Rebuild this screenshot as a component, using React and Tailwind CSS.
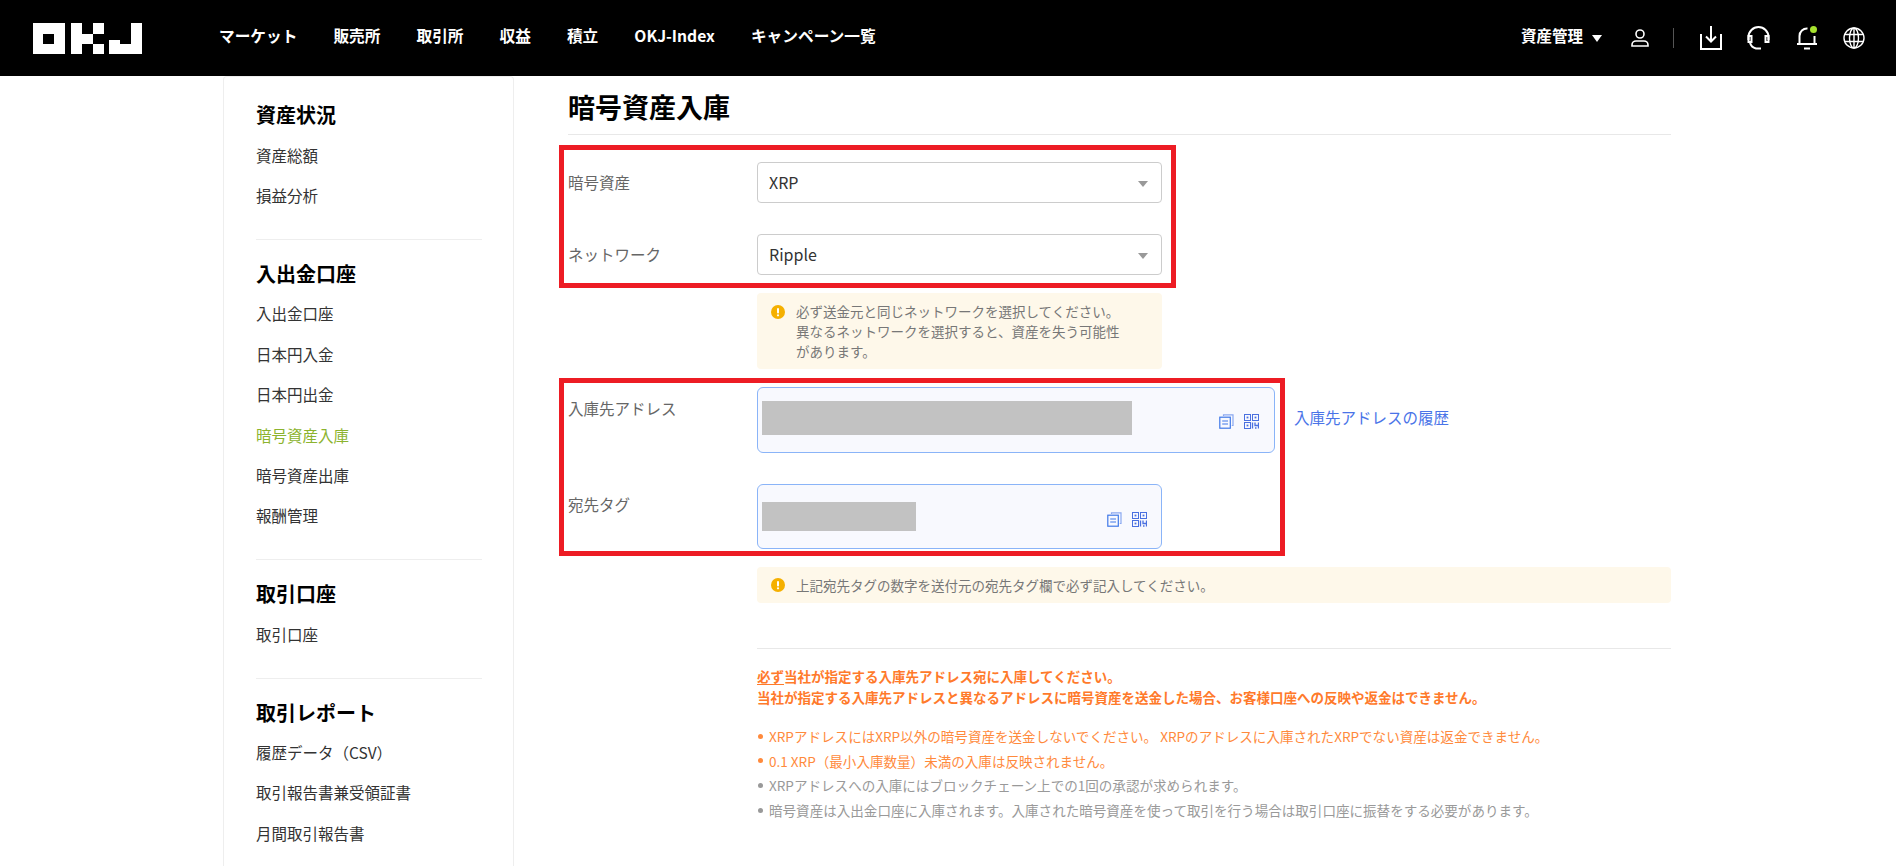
const sections = [
  { title: "資産状況", items: ["資産総額", "損益分析"] },
  { title: "入出金口座", items: ["入出金口座", "日本円入金", "日本円出金", "暗号資産入庫", "暗号資産出庫", "報酬管理"] },
  { title: "取引口座", items: ["取引口座"] },
  { title: "取引レポート", items: ["履歴データ（CSV）", "取引報告書兼受領証書", "月間取引報告書"] },
];
const nav = ["マーケット", "販売所", "取引所", "収益", "積立", "OKJ-Index", "キャンペーン一覧"];

function Logo() {
  return (
    <svg width="109" height="31" viewBox="0 0 109 31" fill="#fff" className="shrink-0">
      <path fillRule="evenodd" d="M0 0H32V31H0ZM10 11V21H21V11Z" />
      <rect x="38" y="0" width="11" height="31" />
      <rect x="49" y="11" width="11" height="10" />
      <rect x="60" y="0" width="11" height="11" />
      <rect x="60" y="21" width="11" height="10" />
      <rect x="76" y="17" width="11" height="14" />
      <rect x="76" y="21" width="33" height="10" />
      <rect x="98" y="0" width="11" height="31" />
    </svg>
  );
}
function UserIcon() {
  return (
    <svg width="18" height="18" viewBox="0 0 18 18" fill="none" stroke="#fff" strokeWidth="1.600">
      <circle cx="9" cy="5" r="4" />
      <path d="M1 17v-1a4 4 0 0 1 4-4h8a4 4 0 0 1 4 4v1z" />
    </svg>
  );
}
function DownloadIcon() {
  return (
    <svg width="22" height="24" viewBox="0 0 22 24" fill="none" stroke="#fff" strokeWidth="2">
      <path d="M1 8V23H21V8" />
      <path d="M11 0V15M6 10.500L11 15.500L16 10.500" />
    </svg>
  );
}
function HeadsetIcon() {
  return (
    <svg width="23" height="24" viewBox="0 0 23 24" fill="none" stroke="#fff" strokeWidth="2">
      <path d="M1.500 14V11a10 10 0 0 1 20 0v3" />
      <path d="M1.500 10h3v6h-3zM18.500 10h3v6h-3z" />
      <path d="M3 16.500a8 8 0 0 0 6 6h5" />
    </svg>
  );
}
function BellIcon() {
  return (
    <svg width="22" height="24" viewBox="0 0 22 24" fill="none" stroke="#fff" strokeWidth="2">
      <path d="M1 18H21" />
      <path d="M3.500 18V10a7.500 7.500 0 0 1 8-7.500" />
      <path d="M18.500 10V18" />
      <path d="M8 22.500H14" />
      <circle cx="17.500" cy="3.500" r="3.500" fill="#a6e22e" stroke="none" />
    </svg>
  );
}
function GlobeIcon() {
  return (
    <svg width="22" height="22" viewBox="0 0 22 22" fill="none" stroke="#fff" strokeWidth="1.400">
      <circle cx="11" cy="11" r="10" />
      <ellipse cx="11" cy="11" rx="4.500" ry="10" />
      <path d="M11 1V21M1.800 7.500H20.200M1.800 14.500H20.200" />
    </svg>
  );
}
function Arrow() {
  return (
    <svg width="10" height="6" viewBox="0 0 10 6" fill="#999" className="ml-auto mr-[13px] mt-[2px]">
      <path d="M0 0H10L5 6Z" />
    </svg>
  );
}
function Warn() {
  return (
    <svg width="14" height="14" viewBox="0 0 14 14" className="shrink-0">
      <circle cx="7" cy="7" r="7" fill="#f5b000" />
      <rect x="6" y="3" width="2" height="5.500" rx="1" fill="#fff" />
      <circle cx="7" cy="10.300" r="1.100" fill="#fff" />
    </svg>
  );
}
function CopyIcon() {
  return (
    <svg width="15" height="15" viewBox="0 0 15 15" fill="none" stroke="#3f78e8" strokeWidth="1.200">
      <path d="M4.500 2V.8H14V11.500H12.800" stroke="#8aa8f0" />
      <rect x=".8" y="3.200" width="10.500" height="11" />
      <path d="M3.200 7H9M3.200 10H9" />
    </svg>
  );
}
function QrIcon() {
  return (
    <svg width="15" height="15" viewBox="0 0 15 15" fill="none" stroke="#4a70e0" strokeWidth="1">
      <rect x=".5" y=".5" width="6" height="6" />
      <rect x="8.500" y=".5" width="6" height="6" />
      <rect x=".5" y="8.500" width="6" height="6" />
      <rect x="2.600" y="2.600" width="1.800" height="1.800" fill="#4a70e0" stroke="none" />
      <rect x="10.600" y="2.600" width="1.800" height="1.800" fill="#4a70e0" stroke="none" />
      <rect x="2.600" y="10.600" width="1.800" height="1.800" fill="#4a70e0" stroke="none" />
      <path d="M8.500 8.500V14.500M11 8.500V11.500H14.500M14.500 8.500V14.500M11 14H12.500" strokeWidth="1.300" />
    </svg>
  );
}
function Select({ value }) {
  return (
    <div className="flex h-[41px] w-[405px] items-center rounded border border-[#cccccc] bg-white pl-[11px] text-base text-[#333333]">
      <span className="mb-[2px]">{value}</span>
      <Arrow />
    </div>
  );
}
function Bullet({ color, text, textColor }) {
  return (
    <div className={`flex h-[24.600px] items-center ${textColor}`}>
      <span className={`mr-[6px] ml-[1px] size-[5px] shrink-0 rounded-full ${color}`} />
      <span>{text}</span>
    </div>
  );
}

export default function App() {
  return (
    <div className="h-[866px] w-[1896px] overflow-hidden bg-white font-['Noto_Sans_CJK_JP','Noto_Sans',sans-serif]">
      <header className="flex h-[76px] items-center bg-black pl-[33px] text-white">
        <Logo />
        <nav className="ml-[77px] flex gap-[36px] pb-[4px] text-[15.700px] font-bold">
          {nav.map((n) => (
            <span key={n} className="whitespace-nowrap">{n}</span>
          ))}
        </nav>
        <div className="ml-auto flex items-center pr-[31px]">
          <span className="pb-[4px] text-[15.500px] font-bold">資産管理</span>
          <svg width="10" height="7" viewBox="0 0 10 7" fill="#fff" className="ml-[9px]">
            <path d="M0 0H10L5 7Z" />
          </svg>
          <span className="ml-[29px]"><UserIcon /></span>
          <span className="ml-[24px] h-[20px] w-px bg-[#555555]" />
          <span className="ml-[26px]"><DownloadIcon /></span>
          <span className="ml-[25px]"><HeadsetIcon /></span>
          <span className="ml-[26px]"><BellIcon /></span>
          <span className="ml-[25px]"><GlobeIcon /></span>
        </div>
      </header>

      <div className="flex">
        <aside className="ml-[223px] h-[790px] w-[291px] shrink-0 rounded-t border-x border-t border-[#eeeeee] pt-[23px] pl-[32px]">
          {sections.map((s, i) => (
            <div key={s.title} className={i === 0 ? "" : "mt-[22px] w-[226px] border-t border-[#eeeeee] pt-[19px]"}>
              <h3 className="mb-[6px] h-[30px] text-xl leading-[30px] font-bold text-black">{s.title}</h3>
              {s.items.map((it) => (
                <div
                  key={it}
                  className={`flex h-[40.400px] items-center pb-[2px] text-[15.500px] whitespace-nowrap ${it === "暗号資産入庫" ? "text-[#8cb32e]" : "text-[#333333]"}`}
                >
                  {it}
                </div>
              ))}
            </div>
          ))}
        </aside>

        <main className="ml-[54px] w-[1103px] shrink-0">
          <h1 className="h-[59px] border-b border-[#e8e8e8] pt-[11px] text-[27px] leading-[40px] font-bold text-black">暗号資産入庫</h1>

          <div className="mt-[10px] -ml-[9px] w-[617px] border-[5px] border-[#ed1c24] pt-[12px] pb-[8px] pl-[4px]">
            <div className="flex items-center">
              <span className="w-[189px] shrink-0 text-[15.500px] text-[#666666]">暗号資産</span>
              <Select value="XRP" />
            </div>
            <div className="mt-[31px] flex items-center">
              <span className="w-[189px] shrink-0 text-[15.500px] text-[#666666]">ネットワーク</span>
              <Select value="Ripple" />
            </div>
          </div>

          <div className="mt-[5px] ml-[189px] flex h-[76px] w-[405px] gap-[11px] rounded bg-[#fef8ea] pt-[8px] pl-[14px] text-[13.500px] leading-[20px] text-[#777777]">
            <span className="mt-[4px]"><Warn /></span>
            <p>
              必ず送金元と同じネットワークを選択してください。<br />
              異なるネットワークを選択すると、資産を失う可能性<br />
              があります。
            </p>
          </div>

          <div className="mt-[9px] flex items-start">
            <div className="-ml-[9px] w-[726px] shrink-0 border-[5px] border-[#ed1c24] pt-[4px] pb-[2px] pl-[4px]">
              <div className="flex">
                <span className="w-[189px] shrink-0 pt-[10px] text-[15.500px] text-[#666666]">入庫先アドレス</span>
                <div className="flex h-[66px] w-[518px] items-start rounded-md border border-[#8ab4f8] bg-[#f8f9fe] pt-[13px] pl-[4px]">
                  <div className="h-[34px] w-[370px] bg-[#c2c2c2]" />
                  <div className="mt-[13px] ml-auto flex gap-[10px] pr-[15px]">
                    <CopyIcon /><QrIcon />
                  </div>
                </div>
              </div>
              <div className="mt-[31px] flex">
                <span className="w-[189px] shrink-0 pt-[9px] text-[15.500px] text-[#666666]">宛先タグ</span>
                <div className="flex h-[65px] w-[405px] items-start rounded-md border border-[#8ab4f8] bg-[#f8f9fe] pt-[17px] pl-[4px]">
                  <div className="h-[29px] w-[154px] bg-[#c2c2c2]" />
                  <div className="mt-[10px] ml-auto flex gap-[10px] pr-[14px]">
                    <CopyIcon /><QrIcon />
                  </div>
                </div>
              </div>
            </div>
            <a className="mt-[27px] ml-[9px] text-[15.500px] leading-[24px] whitespace-nowrap text-[#4a74e8]">入庫先アドレスの履歴</a>
          </div>

          <div className="mt-[11px] ml-[189px] flex h-[36px] w-[914px] items-center gap-[11px] rounded bg-[#fef8ea] pl-[14px] text-[13.500px] text-[#777777]">
            <Warn />
            <span>上記宛先タグの数字を送付元の宛先タグ欄で必ず記入してください。</span>
          </div>

          <div className="mt-[45px] ml-[189px] w-[914px] border-t border-[#e8e8e8] pt-[17px] text-[13.550px]">
            <p className="text-[13.500px] leading-[21px] font-bold text-[#ff7a2b]">
              <span className="underline underline-offset-2 [text-decoration-skip-ink:none]">必ず</span>当社が指定する入庫先アドレス宛に入庫してください。<br />
              当社が指定する入庫先アドレスと異なるアドレスに暗号資産を送金した場合、お客様口座への反映や返金はできません。
            </p>
            <div className="mt-[16px]">
              <Bullet color="bg-[#ff8a3c]" textColor="text-[#ff8a3c]" text="XRPアドレスにはXRP以外の暗号資産を送金しないでください。 XRPのアドレスに入庫されたXRPでない資産は返金できません。" />
              <Bullet color="bg-[#ff8a3c]" textColor="text-[#ff8a3c]" text="0.1 XRP（最小入庫数量）未満の入庫は反映されません。" />
              <Bullet color="bg-[#999999]" textColor="text-[#999999]" text="XRPアドレスへの入庫にはブロックチェーン上での1回の承認が求められます。" />
              <Bullet color="bg-[#999999]" textColor="text-[#999999]" text="暗号資産は入出金口座に入庫されます。入庫された暗号資産を使って取引を行う場合は取引口座に振替をする必要があります。" />
            </div>
          </div>
        </main>
      </div>
    </div>
  );
}
